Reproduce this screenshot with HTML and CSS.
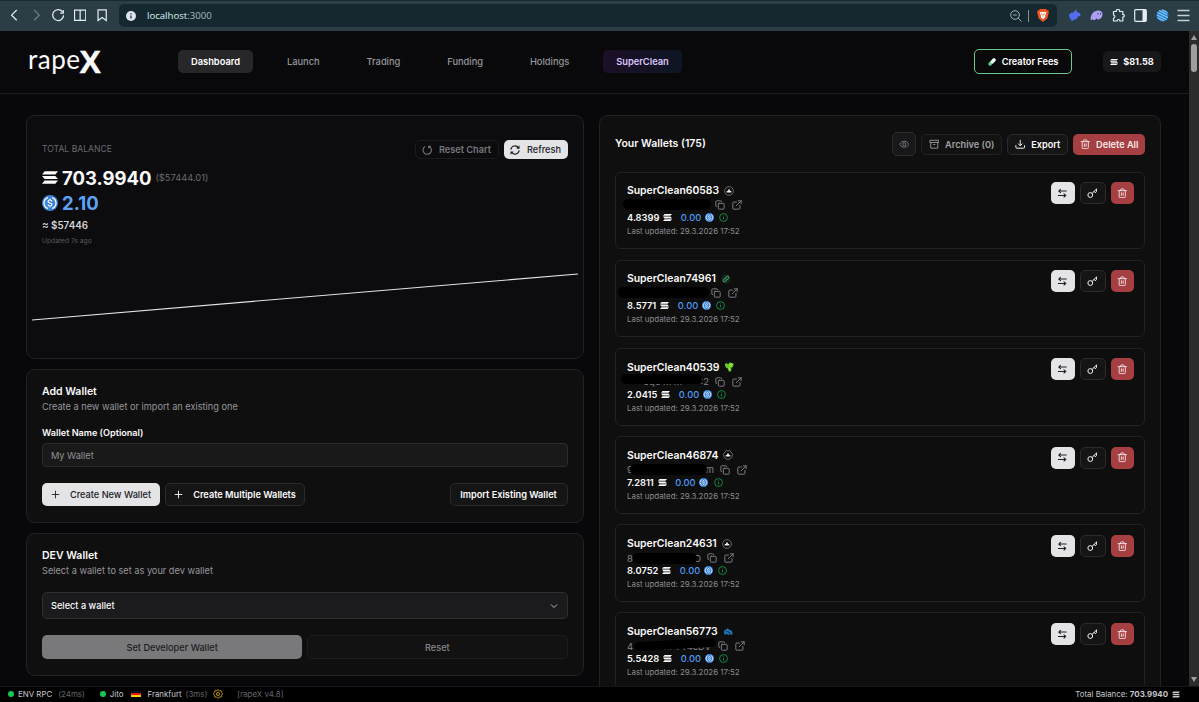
FILE: index.html
```
<!DOCTYPE html>
<html lang="en">
<head>
    <meta charset="UTF-8">
    <meta name="viewport" content="width=device-width, initial-scale=1.0">
    <title>rapeX</title>
    <link rel="stylesheet" href="styles.css">
</head>
<body>
    <!-- Icon set -->
    <svg class="sprite" aria-hidden="true">
        <symbol id="sol" viewBox="0 0 18 14"><path d="M3 0h15l-3 3.600H0zM0 5.200h15l3 3.600H3zM3 10.400h15L15 14H0z" fill="currentColor"/></symbol>
        <symbol id="usdc" viewBox="0 0 24 24"><circle cx="12" cy="12" r="12" fill="#3b82d8"/><path d="M9 3.800a8.600 8.600 0 0 0 0 16.400M15 3.800a8.600 8.600 0 0 1 0 16.400" fill="none" stroke="#fff" stroke-width="1.900"/><path d="M15 9.600c0-1.500-1.300-2.100-3-2.100s-3 .8-3 2.200c0 3 6 1.600 6 4.600 0 1.500-1.300 2.200-3 2.200s-3-.8-3-2.200M12 5.600v1.900M12 16.500v1.900" fill="none" stroke="#fff" stroke-width="1.700"/></symbol>
        <symbol id="info" viewBox="0 0 24 24"><g fill="none" stroke="currentColor" stroke-width="2.400"><circle cx="12" cy="12" r="10.500"/><path d="M12 11v6M12 7v2"/></g></symbol>
        <symbol id="copy" viewBox="0 0 24 24"><g fill="none" stroke="currentColor" stroke-width="2.200" stroke-linejoin="round" stroke-linecap="round"><rect x="8" y="8" width="14" height="14" rx="2"/><path d="M4 16a2 2 0 0 1-2-2V4c0-1.100.9-2 2-2h10a2 2 0 0 1 2 2"/></g></symbol>
        <symbol id="link" viewBox="0 0 24 24"><path d="M15 2h7v7M10 14 22 2M19 13v7a2 2 0 0 1-2 2H4a2 2 0 0 1-2-2V7a2 2 0 0 1 2-2h7" fill="none" stroke="currentColor" stroke-width="2.200" stroke-linecap="round" stroke-linejoin="round"/></symbol>
        <symbol id="trash" viewBox="0 0 24 24"><path d="M2.500 6h19M5 6v14a2 2 0 0 0 2 2h10a2 2 0 0 0 2-2V6M8 6V4a2 2 0 0 1 2-2h4a2 2 0 0 1 2 2v2M10 11v6M14 11v6" fill="none" stroke="currentColor" stroke-width="2" stroke-linecap="round" stroke-linejoin="round"/></symbol>
        <symbol id="swap" viewBox="0 0 24 24"><path d="M21 7H4l4-4M4 7l4 3.500M3 17h17l-4-3.500M20 17l-4 4" fill="none" stroke="currentColor" stroke-width="2.400" stroke-linecap="round" stroke-linejoin="round"/></symbol>
        <symbol id="key" viewBox="0 0 24 24"><path d="M11.500 12.500 21.500 2.500M16 8l3 3 2.500-2.500V2.500" fill="none" stroke="currentColor" stroke-width="2.200" stroke-linecap="round" stroke-linejoin="round"/><circle cx="7.500" cy="16" r="5.500" fill="none" stroke="currentColor" stroke-width="2.200"/></symbol>
        <symbol id="plus" viewBox="0 0 24 24"><path d="M3 12h18M12 3v18" stroke="currentColor" stroke-width="2.400" stroke-linecap="round"/></symbol>
        <symbol id="badge" viewBox="0 0 24 24"><circle cx="12" cy="12" r="10.500" fill="none" stroke="#77777c" stroke-width="2"/><path d="M12 6.500 15 12h2.500v3.500h-11V12H9z" fill="#eee"/></symbol>
    </svg>

    <div class="browser">
        <div class="browser-icons">
            <svg viewBox="0 0 12 12"><path d="M8.500 1 3.500 6l5 5"/></svg>
            <svg class="off" viewBox="0 0 12 12"><path d="m4 1 5 5-5 5"/></svg>
            <svg viewBox="0 0 12 12"><path d="M10.200 2.700A5.300 5.300 0 1 0 11.300 6M8 4h3V1"/></svg>
            <svg viewBox="0 0 12 12"><path d="M.5 1h11v10H.5zM6 1v10"/></svg>
            <svg viewBox="0 0 12 12"><path d="M2 .8h8v10.500L6 8.300l-4 3z"/></svg>
        </div>
        <div class="url">
            <svg class="url-info" viewBox="0 0 10 10"><circle cx="5" cy="5" r="5" fill="#dbe5ea"/><path d="M5 4.400v3.200M5 2.300v1.200" stroke="#152830" stroke-width="1.200"/></svg>
            <span>localhost<i>:3000</i></span>
            <svg class="mag" viewBox="0 0 12 12"><circle cx="5" cy="5" r="4.300"/><path d="m8.200 8.200 3.300 3.300M3.200 5h3.600"/></svg>
            <b class="url-line"></b>
            <svg class="brave" viewBox="0 0 12 13"><path d="M3 0h6l1 1.300 1.500.2.300 2L10.300 9.500 6 13 1.700 9.500.2 3.500l.3-2L2 1.300z" fill="#f4511e"/><path d="M2.500 3.300 6 2.700l3.500.6L8 7l.3 1.200L6 10.200 3.700 8.200 4 7z" fill="#fff"/><path d="m4 4.800 1.300.5M8 4.800l-1.300.5M6 5v2.500" stroke="#f4511e" stroke-width=".8"/></svg>
        </div>
        <div class="extensions">
            <svg viewBox="0 0 13 13"><path d="M1 7c0-2.500 2.500-4 4.500-3.500C6.500 1.500 8.500.5 9 .8c.3.500-.5 1.500-1 2.200 2-.5 4.500 1 4.500 3.500 0 1-1.500 1-2.500.5C10 9.500 8 11 6 10.500L4 12.500c-1 0-.5-1.500-.5-2.500L2 10.500 1.800 8.500z" fill="#526df2"/></svg>
            <svg viewBox="0 0 13 13"><path d="M.5 10C.8 5 4 1.500 8 1.500c3 0 5 2 4.500 4.500-.5 3-2.700 4.500-4.500 4.500-1 0-1-1-1.300-1.200C5.800 10.500 4.500 11.500 3.500 11c-.7 0-.5-1-.5-1-1 1-2.500 1.500-2.500 0z" fill="#ab9ff2"/><path d="M8 4v1.500M10.500 4v1.500" stroke="#4b4a70"/></svg>
            <svg viewBox="0 0 13 13"><path d="M1.500 2.500h2.800C3.800.8 5 .5 6 .5s2 .5 1.500 2h3.300v3c2-.5 2 3 0 2.500v4H7.800c.3-2-3-2-2.500 0H1.500V9c1.800 0 1.800-3 0-3z" fill="none" stroke="#e3ecf0" stroke-width="1.200" stroke-linejoin="round"/></svg>
            <svg viewBox="0 0 13 13"><rect x=".7" y=".7" width="11.600" height="11.600" rx="1" fill="none" stroke="#e3ecf0" stroke-width="1.200"/><path d="M8.500 1h3.500v11H8.500z" fill="#e3ecf0"/></svg>
            <svg viewBox="0 0 13 13"><circle cx="6.500" cy="6.500" r="6" fill="#2784d8"/><path d="m3 1.500 8 4M1.500 3.500l10.500 5M1 6l9.500 4.700M1.500 8.700 8 12M6 .8l5.500 2.700" stroke="#b9e2ef" stroke-width=".8"/></svg>
            <svg viewBox="0 0 13 13"><path d="M.5 1.500h12M.5 6.500h12M.5 11.500h12" stroke="#c5d0d5" stroke-width="1.300"/></svg>
        </div>
    </div>

    <div class="viewport">
        <div class="page">
            <header>
                <div class="logo"><span>rape</span><b>X</b></div>
                <nav>
                    <a class="active">Dashboard</a>
                    <a>Launch</a>
                    <a>Trading</a>
                    <a>Funding</a>
                    <a>Holdings</a>
                    <a class="super">SuperClean</a>
                </nav>
                <button class="creator"><svg viewBox="0 0 10 10"><path d="m2.500 7.500 5-5" stroke="#5fcf91" stroke-width="4" stroke-linecap="round"/><path d="m5.300 4.700 2.200-2.200" stroke="#f1fff6" stroke-width="4" stroke-linecap="round"/></svg>Creator Fees</button>
                <div class="chip"><svg><use href="#sol"/></svg>$81.58</div>
            </header>

            <main>
                <div class="left">
                    <section class="card balance-card">
                        <div class="balance-head">
                            <span class="overline">TOTAL BALANCE</span>
                            <button class="btn dim reset-chart"><svg viewBox="0 0 12 12"><path d="M3.800 1.800A5 5 0 1 0 8.300 1.600M8 4V1.400h2.600" fill="none" stroke="currentColor" stroke-width="1.300"/></svg>Reset Chart</button>
                            <button class="btn light refresh"><svg viewBox="0 0 12 12"><path d="M1 5.500A5 5 0 0 1 10 3.200M10.800 1v2.700H8M11 6.500A5 5 0 0 1 2 8.800M1.200 11V8.300H4" fill="none" stroke="currentColor" stroke-width="1.300"/></svg>Refresh</button>
                        </div>
                        <div class="sol-total"><svg><use href="#sol"/></svg><strong>703.9940</strong><span>($57444.01)</span></div>
                        <div class="usdc-total"><svg><use href="#usdc"/></svg><strong>2.10</strong></div>
                        <div class="usd-total">≈ $57446</div>
                        <div class="updated">Updated 7s ago</div>
                        <svg class="chart" viewBox="0 0 548 60" preserveAspectRatio="none"><path d="M1 53 547 7" fill="none" stroke="#e4e4e7" stroke-width="1.100"/></svg>
                    </section>

                    <section class="card add-card">
                        <h2>Add Wallet</h2>
                        <p>Create a new wallet or import an existing one</p>
                        <label for="walletName">Wallet Name (Optional)</label>
                        <input type="text" id="walletName" placeholder="My Wallet">
                        <div class="add-actions">
                            <button class="btn light"><svg><use href="#plus"/></svg>Create New Wallet</button>
                            <button class="btn dark"><svg><use href="#plus"/></svg>Create Multiple Wallets</button>
                            <button class="btn dark import">Import Existing Wallet</button>
                        </div>
                    </section>

                    <section class="card dev-card">
                        <h2>DEV Wallet</h2>
                        <p>Select a wallet to set as your dev wallet</p>
                        <div class="select">Select a wallet<svg viewBox="0 0 8 6"><path d="m1 1.500 3 3 3-3" fill="none" stroke="currentColor"/></svg></div>
                        <div class="dev-actions">
                            <button class="btn set-dev">Set Developer Wallet</button>
                            <button class="btn reset-dev">Reset</button>
                        </div>
                    </section>
                </div>

                <section class="card wallets">
                    <div class="wallets-head">
                        <h2>Your Wallets (175)</h2>
                        <button class="btn eye"><svg viewBox="0 0 24 24"><path d="M1.500 12S5 5 12 5s10.500 7 10.500 7S19 19 12 19 1.500 12 1.500 12z" fill="none" stroke="currentColor" stroke-width="2"/><circle cx="12" cy="12" r="3.500" fill="none" stroke="currentColor" stroke-width="2"/></svg></button>
                        <button class="btn archive"><svg viewBox="0 0 24 24"><path d="M2 3h20v5H2zM4 8v13h16V8M9.500 12.500h5" fill="none" stroke="currentColor" stroke-width="2"/></svg>Archive (0)</button>
                        <button class="btn dark export"><svg viewBox="0 0 24 24"><path d="M2 14v5a2 2 0 0 0 2 2h16a2 2 0 0 0 2-2v-5M12 2v13M7 10.500l5 5 5-5" fill="none" stroke="currentColor" stroke-width="2.200"/></svg>Export</button>
                        <button class="btn red delete"><svg><use href="#trash"/></svg>Delete All</button>
                    </div>

                    <div class="wallet">
                        <div class="wallet-info">
                            <div class="name">SuperClean60583<svg><use href="#badge"/></svg></div>
                            <div class="address"><span class="addr a1"></span><svg><use href="#copy"/></svg><svg><use href="#link"/></svg></div>
                            <div class="amounts">4.8399<svg class="sol"><use href="#sol"/></svg><em>0.00</em><svg class="usdc"><use href="#usdc"/></svg><svg class="info"><use href="#info"/></svg></div>
                            <div class="date">Last updated: 29.3.2026 17:52</div>
                        </div>
                        <button class="btn light swap"><svg><use href="#swap"/></svg></button>
                        <button class="btn dark key"><svg><use href="#key"/></svg></button>
                        <button class="btn red bin"><svg><use href="#trash"/></svg></button>
                    </div>

                    <div class="wallet">
                        <div class="wallet-info">
                            <div class="name">SuperClean74961<svg viewBox="0 0 24 24"><circle cx="12" cy="12" r="11" fill="#15271c"/><path d="m8 16 8-8" stroke="#43a66a" stroke-width="8" stroke-linecap="round"/><path d="m8 16 8-8" stroke="#173322" stroke-width="4" stroke-linecap="round"/><path d="m10 10 4 4" stroke="#43a66a" stroke-width="2"/></svg></div>
                            <div class="address"><span class="addr a2"></span><svg><use href="#copy"/></svg><svg><use href="#link"/></svg></div>
                            <div class="amounts">8.5771<svg class="sol"><use href="#sol"/></svg><em>0.00</em><svg class="usdc"><use href="#usdc"/></svg><svg class="info"><use href="#info"/></svg></div>
                            <div class="date">Last updated: 29.3.2026 17:52</div>
                        </div>
                        <button class="btn light swap"><svg><use href="#swap"/></svg></button>
                        <button class="btn dark key"><svg><use href="#key"/></svg></button>
                        <button class="btn red bin"><svg><use href="#trash"/></svg></button>
                    </div>

                    <div class="wallet">
                        <div class="wallet-info">
                            <div class="name">SuperClean40539<svg viewBox="0 0 24 24"><path d="M2 5c2-3 6-3 8 1l2-4 4-1 2 2 4 0 1 5-3 5-3 1 1 5-2 4h-5l-1-7-5-2-2-4z" fill="#65c52c"/><path d="m12 10 5-6 3 2-4 5M11 13l3 7" stroke="#c6f257" stroke-width="2" fill="none"/></svg></div>
                            <div class="address"><span class="addr a3"><span>Squ m m</span><span>:2</span></span><svg><use href="#copy"/></svg><svg><use href="#link"/></svg></div>
                            <div class="amounts">2.0415<svg class="sol"><use href="#sol"/></svg><em>0.00</em><svg class="usdc"><use href="#usdc"/></svg><svg class="info"><use href="#info"/></svg></div>
                            <div class="date">Last updated: 29.3.2026 17:52</div>
                        </div>
                        <button class="btn light swap"><svg><use href="#swap"/></svg></button>
                        <button class="btn dark key"><svg><use href="#key"/></svg></button>
                        <button class="btn red bin"><svg><use href="#trash"/></svg></button>
                    </div>

                    <div class="wallet">
                        <div class="wallet-info">
                            <div class="name">SuperClean46874<svg><use href="#badge"/></svg></div>
                            <div class="address"><span class="addr a4"><span>9</span><span>m</span></span><svg><use href="#copy"/></svg><svg><use href="#link"/></svg></div>
                            <div class="amounts">7.2811<svg class="sol"><use href="#sol"/></svg><em>0.00</em><svg class="usdc"><use href="#usdc"/></svg><svg class="info"><use href="#info"/></svg></div>
                            <div class="date">Last updated: 29.3.2026 17:52</div>
                        </div>
                        <button class="btn light swap"><svg><use href="#swap"/></svg></button>
                        <button class="btn dark key"><svg><use href="#key"/></svg></button>
                        <button class="btn red bin"><svg><use href="#trash"/></svg></button>
                    </div>

                    <div class="wallet">
                        <div class="wallet-info">
                            <div class="name">SuperClean24631<svg><use href="#badge"/></svg></div>
                            <div class="address"><span class="addr a5"><span>8</span><span>.D</span></span><svg><use href="#copy"/></svg><svg><use href="#link"/></svg></div>
                            <div class="amounts">8.0752<svg class="sol"><use href="#sol"/></svg><em>0.00</em><svg class="usdc"><use href="#usdc"/></svg><svg class="info"><use href="#info"/></svg></div>
                            <div class="date">Last updated: 29.3.2026 17:52</div>
                        </div>
                        <button class="btn light swap"><svg><use href="#swap"/></svg></button>
                        <button class="btn dark key"><svg><use href="#key"/></svg></button>
                        <button class="btn red bin"><svg><use href="#trash"/></svg></button>
                    </div>

                    <div class="wallet">
                        <div class="wallet-info">
                            <div class="name">SuperClean56773<svg viewBox="0 0 24 24"><path d="M3 16c-2-5 0-9 4-10l4-3 5 4c4 0 7 4 7 9l-3 3-4-2-3 3-4-4-3 3z" fill="#1d76b5"/><path d="M7 11h6v4M16 12v4" stroke="#0c2c48" stroke-width="2" fill="none"/></svg></div>
                            <div class="address"><span class="addr a6"><span>4</span><span>m YY4cDV</span></span><svg><use href="#copy"/></svg><svg><use href="#link"/></svg></div>
                            <div class="amounts">5.5428<svg class="sol"><use href="#sol"/></svg><em>0.00</em><svg class="usdc"><use href="#usdc"/></svg><svg class="info"><use href="#info"/></svg></div>
                            <div class="date">Last updated: 29.3.2026 17:52</div>
                        </div>
                        <button class="btn light swap"><svg><use href="#swap"/></svg></button>
                        <button class="btn dark key"><svg><use href="#key"/></svg></button>
                        <button class="btn red bin"><svg><use href="#trash"/></svg></button>
                    </div>
                </section>
            </main>
        </div>
        <div class="scrollbar"><i class="arrow"></i><i class="thumb"></i><i class="arrow down"></i></div>
    </div>

    <footer>
        <i class="dot"></i><span class="env">ENV RPC</span><span class="muted rpc-ms">(24ms)</span>
        <i class="dot"></i><span class="jito">Jito</span><i class="flag"></i><span class="city">Frankfurt</span><span class="muted">(3ms)</span>
        <svg class="gear" viewBox="0 0 24 24"><path d="m12 1.500 3 2.700 4-.4 1.200 3.900L23 11.500 20.500 15l-.7 4.200-4.300.3L12 22.500l-3.500-3-4.300-.3L3.500 15 1 11.500l2.800-3.800L5 3.800l4 .4z" fill="none" stroke="#c9a20c" stroke-width="2.200"/><circle cx="12" cy="12" r="3.700" fill="none" stroke="#c9a20c" stroke-width="2.200"/></svg>
        <span class="muted">[rapeX v4.8]</span>
        <span class="foot-total">Total Balance: <b>703.9940</b></span><svg class="foot-sol"><use href="#sol"/></svg>
    </footer>
</body>
</html>
```
FILE: styles.css
```
* {
    box-sizing: border-box;
}
body {
    margin: 0;
    height: 702px;
    display: flex;
    flex-direction: column;
    overflow: hidden;
    background-color: #08080a;
    color: #fafafa;
    font-family: Inter, sans-serif;
    font-size: 9.3px;
}
svg {
    display: block;
    flex: none;
}
button {
    font-family: inherit;
    cursor: pointer;
}
h2, p {
    margin: 0;
}
.sprite {
    position: absolute;
    width: 0;
    height: 0;
}

/* Browser bar */
.browser {
    height: 31px;
    flex: none;
    display: flex;
    align-items: center;
    padding-bottom: 1px;
    background-color: #2b3d45;
    border-top: 1px solid #172b33;
}
.browser-icons {
    width: 119px;
    padding-left: 8px;
    display: flex;
    gap: 9.7px;
}
.browser-icons svg {
    width: 12.3px;
    height: 12.3px;
    fill: none;
    stroke: #e3ecf0;
    stroke-width: 1.2;
}
.browser-icons .off {
    stroke: #71818a;
}
.url {
    width: 938px;
    height: 23px;
    display: flex;
    align-items: center;
    border-radius: 5px;
    background-color: #152830;
    color: #dcf0f0;
    font-family: "Open Sans", sans-serif;
    font-size: 9.6px;
}
.url span {
    flex: 1;
}
.url i {
    font-style: normal;
    color: #a9bbc0;
}
.url-info {
    width: 10px;
    height: 10px;
    margin: 0 11px 0 7px;
}
.mag {
    width: 12px;
    height: 12px;
    fill: none;
    stroke: #a3b2b8;
}
.url-line {
    width: 1px;
    height: 12px;
    margin: 0 8px 0 6px;
    background-color: #83949b;
}
.brave {
    width: 12px;
    height: 13px;
    margin-right: 8px;
}
.extensions {
    display: flex;
    gap: 8.9px;
    padding-left: 11px;
}
.extensions svg {
    width: 13px;
    height: 13px;
}

/* Page shell */
.viewport {
    display: flex;
    height: 655px;
    flex: none;
    overflow: hidden;
}
.page {
    width: 1189px;
    flex: none;
}
.scrollbar {
    width: 10px;
    display: flex;
    flex-direction: column;
    align-items: center;
    background-color: #2c2c2c;
}
.arrow {
    border: 3.5px solid transparent;
    border-top: 0;
    border-bottom: 5px solid #9f9f9f;
    margin: 4px 0;
}
.arrow.down {
    transform: rotate(180deg);
    margin-top: auto;
}
.thumb {
    width: 6px;
    height: 28px;
    border-radius: 3px;
    background-color: #9f9f9f;
}
header {
    height: 63px;
    display: flex;
    align-items: center;
    padding: 0 28px 1px;
    border-bottom: 1px solid #1d1d20;
    background-color: #09090b;
}
.logo {
    width: 150px;
    display: flex;
    align-items: center;
    font-family: Lato, sans-serif;
    font-size: 26px;
    line-height: 30px;
}
.logo span {
    padding-bottom: 5px;
    letter-spacing: 0.5px;
}
.logo b {
    margin-left: -1px;
    padding-top: 1px;
    font-family: "Liberation Sans", sans-serif;
    font-size: 32px;
    line-height: 30px;
    -webkit-text-stroke: 0.5px #fafafa;
}
nav {
    display: flex;
    gap: 20.9px;
    flex: 1;
}
nav a {
    padding: 0 13px;
    line-height: 23px;
    border-radius: 5px;
    color: #96969c;
    font-weight: 500;
}
nav .active {
    color: #fff;
    background-color: #27272a;
    font-weight: 600;
}
nav .super {
    color: #dcc6fb;
    background: linear-gradient(90deg, #1d0f27, #0d1624);
    font-weight: 600;
}
.creator {
    width: 98px;
    height: 25px;
    display: flex;
    align-items: center;
    justify-content: center;
    gap: 6px;
    border: 1px solid #6fc78f;
    border-radius: 5px;
    background-color: #09090b;
    color: #fff;
    font-size: 9.2px;
    font-weight: 600;
    padding: 0;
}
.creator svg {
    width: 8px;
    height: 8px;
}
.chip {
    width: 58px;
    height: 21px;
    margin-left: 31px;
    display: flex;
    align-items: center;
    justify-content: center;
    gap: 5px;
    border-radius: 5px;
    background-color: #18181b;
    font-size: 9.1px;
    font-weight: 700;
}
.chip svg {
    width: 8px;
    height: 8px;
}

/* Cards */
main {
    display: flex;
    gap: 15px;
    padding: 21px 28px 0 25.5px;
    align-items: flex-start;
}
.left {
    width: 558.5px;
    display: flex;
    flex-direction: column;
    gap: 10px;
}
.card {
    border: 1px solid #222225;
    border-radius: 9px;
    background-color: #0f0f0f;
    padding: 0 15.5px;
}
.card h2 {
    font-size: 10.5px;
    line-height: 16px;
    font-weight: 600;
}
.card p {
    font-size: 9.2px;
    line-height: 14px;
    color: #96969c;
}
.btn {
    display: flex;
    align-items: center;
    justify-content: center;
    height: 23px;
    padding: 0;
    border: 1px solid transparent;
    border-radius: 5px;
    font-size: 9.2px;
    font-weight: 600;
}
.btn svg {
    width: 10.5px;
    height: 10.5px;
}
.light {
    background-color: #e4e4e7;
    color: #202024;
    font-weight: 500;
}
.dark {
    background-color: #151515;
    border-color: #2b2b2e;
    color: #fafafa;
}
.dim {
    background-color: #0c0c0e;
    border-color: #1b1b1e;
    color: #77777c;
}
.red {
    background-color: #a53f41;
    color: #f7eaea;
}

/* Total balance */
.balance-card {
    height: 244px;
    background-color: #0c0c0e;
}
.balance-head {
    display: flex;
    padding-top: 24px;
    gap: 5px;
}
.overline {
    flex: 1;
    color: #69696e;
    font-size: 8.6px;
    line-height: 18px;
}
.balance-head .btn {
    height: 19px;
    gap: 7px;
}
.reset-chart {
    width: 84px;
}
.refresh {
    width: 64px;
}
.balance-head svg {
    width: 10px;
    height: 10px;
}
.sol-total, .usdc-total {
    display: flex;
    align-items: center;
    height: 25px;
    font-size: 18.5px;
}
.sol-total {
    margin-top: 6px;
}
.sol-total svg, .usdc-total svg {
    width: 16px;
    height: 13px;
    margin-right: 4px;
}
.usdc-total svg {
    height: 16px;
}
.sol-total span {
    margin-left: 4px;
    font-size: 9.3px;
    color: #69696e;
}
.usdc-total {
    color: #5ba3f8;
}
.usd-total {
    margin-top: 1px;
    font-size: 9.8px;
    font-weight: 600;
    line-height: 19px;
    color: #d4d4d8;
}
.updated {
    font-size: 6.7px;
    line-height: 12px;
    color: #59595e;
}
.chart {
    width: 548px;
    height: 60px;
    margin: 20px 0 0 -11.5px;
}

/* Add wallet */
.add-card {
    height: 154px;
    padding-top: 14px;
}
.add-card label {
    display: block;
    margin: 12px 0 3px;
    font-size: 9.1px;
    line-height: 14px;
    font-weight: 600;
}
.add-card input {
    display: block;
    width: 100%;
    height: 24px;
    padding: 0 8px;
    border: 1px solid #2b2b2e;
    border-radius: 4px;
    background-color: #19191a;
    color: #fafafa;
    font-family: inherit;
    font-size: 9.2px;
}
.add-card input::placeholder {
    color: #929297;
}
.add-actions {
    display: flex;
    gap: 5px;
    margin-top: 16px;
}
.add-actions .btn {
    gap: 10px;
}
.add-actions svg {
    width: 9px;
    height: 9px;
}
.add-actions .light {
    width: 118px;
}
.add-actions .dark {
    width: 140px;
}
.add-actions .import {
    width: 118px;
    margin-left: auto;
}

/* Dev wallet */
.dev-card {
    height: 143px;
    padding-top: 14px;
}
.select {
    height: 27px;
    margin-top: 14px;
    padding: 0 9px 0 8px;
    display: flex;
    align-items: center;
    justify-content: space-between;
    border: 1px solid #2f2f33;
    border-radius: 5px;
    background-color: #1b1b1d;
    font-size: 9.2px;
    font-weight: 500;
}
.select svg {
    width: 8px;
    height: 6px;
    color: #bbb;
}
.dev-actions {
    display: flex;
    gap: 5px;
    margin-top: 16px;
}
.dev-actions .btn {
    height: 24px;
    flex: 1;
    font-weight: 500;
}
.set-dev {
    background-color: #79797b;
    color: #1c1c1e;
}
.reset-dev {
    background-color: #121212;
    border-color: #1d1d1f;
    color: #87878b;
}

/* Wallet list */
.wallets {
    width: 562px;
    height: 700px;
    padding: 16px 15px;
}
.wallets-head {
    display: flex;
    align-items: center;
    height: 24px;
    margin-bottom: 15.5px;
}
.wallets-head h2 {
    flex: 1;
}
.wallets-head .btn {
    height: 21px;
    gap: 6px;
    margin-left: 5px;
}
.wallets-head .eye {
    width: 24px;
    height: 24px;
    background-color: #18181a;
    border-color: #2b2b2e;
    color: #85858a;
}
.archive {
    width: 81px;
    background-color: #121212;
    border-color: #232325;
    color: #a0a0a5;
}
.export {
    width: 61px;
}
.delete {
    width: 72px;
}
.wallet {
    height: 77.7px;
    margin-bottom: 10.5px;
    padding: 9.5px 10.5px 0 11px;
    display: flex;
    gap: 5px;
    border: 1px solid #222225;
    border-radius: 6px;
    background-color: #0e0e0e;
}
.wallet-info {
    flex: 1;
    padding-top: 0.8px;
}
.wallet-info div {
    display: flex;
    align-items: center;
}
.name {
    height: 16px;
    font-size: 10.4px;
    font-weight: 600;
}
.name svg {
    width: 10px;
    height: 10px;
    margin-left: 5px;
}
.address {
    height: 13px;
    color: #85858a;
}
.address svg {
    width: 10px;
    height: 10px;
    margin-right: 7px;
}
.addr {
    position: relative;
    display: flex;
    justify-content: space-between;
    font-size: 9.4px;
}
.addr::after {
    content: "";
    position: absolute;
    height: 11px;
    border-radius: 6px;
    background-color: #000;
}
.a1 {
    width: 88px;
}
.a1::after {
    left: -4px;
    top: -6px;
    width: 88px;
}
.a2 {
    width: 84px;
}
.a2::after {
    left: -9px;
    top: -6px;
    width: 91px;
}
.a3 {
    width: 88px;
    padding: 0 6px 0 16px;
}
.a3::after {
    left: -6px;
    top: -2px;
    width: 81px;
    height: 10px;
}
.a4 {
    width: 93px;
    padding-right: 6px;
}
.a4::after {
    left: 3px;
    top: 0;
    width: 77px;
}
.a5 {
    width: 80px;
    padding-right: 6px;
}
.a5::after {
    left: 6px;
    top: 0;
    width: 64px;
}
.a6 {
    width: 91px;
    padding-right: 7px;
}
.a6::after {
    left: 7px;
    top: -1px;
    width: 82px;
    height: 9px;
    transform: rotate(-3deg);
}
.amounts {
    height: 12px;
    font-size: 9.3px;
    font-weight: 600;
}
.amounts .sol {
    width: 9px;
    height: 7px;
    margin: 0 8.5px 0 4px;
}
.amounts em {
    font-style: normal;
    font-weight: 500;
    color: #4e9bf5;
}
.amounts .usdc, .amounts .info {
    width: 9px;
    height: 9px;
    margin-left: 3.5px;
}
.amounts .info {
    margin-left: 5.5px;
    color: #169447;
}
.date {
    height: 15px;
    font-size: 7.9px;
    color: #8b8b90;
}
.wallet .btn {
    height: 22px;
}
.swap {
    width: 24px;
}
.key {
    width: 26px;
}
.bin {
    width: 23px;
}

/* Status bar */
footer {
    height: 16px;
    flex: none;
    display: flex;
    align-items: center;
    padding: 0 19px 1px 8px;
    background-color: #000;
    border-top: 1px solid #151517;
    font-size: 7.9px;
    color: #c9c9cc;
}
.dot {
    width: 6px;
    height: 6px;
    border-radius: 50%;
    background-color: #16c653;
    margin-right: 4px;
}
.muted {
    color: #67676b;
}
.env {
    margin-right: 6px;
}
.rpc-ms {
    margin-right: 15px;
}
.jito {
    margin-right: 7px;
}
.flag {
    width: 10px;
    height: 6px;
    margin-right: 7px;
    background: linear-gradient(#111 33%, #e01818 33% 66%, #ffce00 66%);
}
.city {
    margin-right: 4px;
}
.gear {
    width: 10px;
    height: 10px;
    margin: 0 14px 0 6px;
}
.foot-total {
    margin-left: auto;
}
.foot-sol {
    width: 8px;
    height: 7px;
    margin-left: 4px;
}
```
